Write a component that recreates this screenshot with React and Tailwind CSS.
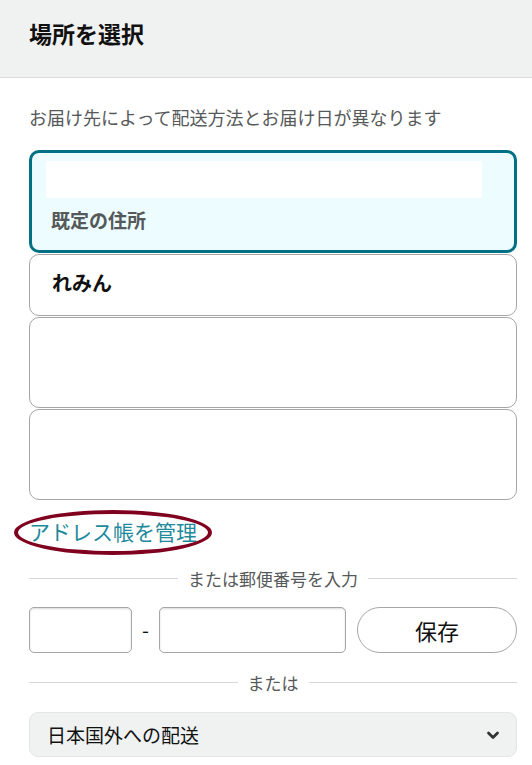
import React from 'react';

const font = { fontFamily: '"Noto Sans CJK JP", "Noto Sans", sans-serif' };

const Divider = ({ label }) => (
  <div className="flex items-center gap-[10px]">
    <div className="flex-1 h-px bg-[#d5d9d9]" />
    <span className="text-[17px] leading-none text-[#565959]">{label}</span>
    <div className="flex-1 h-px bg-[#d5d9d9]" />
  </div>
);

const App = () => {
  return (
    <div className="w-[532px] h-[765px] bg-white overflow-hidden" style={font}>
      <div className="h-[78px] bg-[#f0f2f2] border-b border-[#dcdcdc] flex items-center px-[29px]">
        <h1 className="text-[23px] font-bold text-[#111] leading-none mb-[10px]">場所を選択</h1>
      </div>

      <div className="pl-[29px] pr-[15px] pt-[30px]">
        <p className="text-[18px] leading-none text-[#565959]">
          お届け先によって配送方法とお届け日が異なります
        </p>

        <div className="mt-[24px] flex flex-col gap-[1px]">
          <div className="h-[103px] rounded-[10px] border-[3px] border-[#007185] bg-[#edfdff] px-[14px] pt-[8px]">
            <div className="h-[37px] bg-white mr-[18px]" />
            <div className="text-[19px] font-bold text-[#565959] leading-none mt-[12px] ml-[5px]">既定の住所</div>
          </div>
          <div className="h-[62px] rounded-[10px] border border-[#a6a6a6] px-[22px] flex items-start pt-[18px]">
            <span className="text-[20px] font-bold text-[#111] leading-none">れみん</span>
          </div>
          <div className="h-[91px] rounded-[10px] border border-[#a6a6a6]" />
          <div className="h-[91px] rounded-[10px] border border-[#a6a6a6]" />
        </div>

        <div className="relative mt-[21px] h-[24px]">
          <a href="#" className="text-[21px] leading-none text-[#1f8a9b] whitespace-nowrap">アドレス帳を管理</a>
          <div className="absolute left-[-15px] top-[-11px] w-[198px] h-[45px] rounded-[50%] border-[4px] border-[#800020]" />
        </div>

        <div className="mt-[25px]">
          <Divider label="または郵便番号を入力" />
        </div>

        <div className="mt-[20px] flex items-center h-[46px]">
          <input className="w-[103px] h-[46px] rounded-[5px] border border-[#a6a6a6] shadow-[inset_0_1px_2px_rgba(15,17,17,0.15)] outline-none" />
          <span className="w-[27px] text-center text-[20px] text-[#111] leading-none">-</span>
          <input className="w-[187px] h-[46px] rounded-[5px] border border-[#a6a6a6] shadow-[inset_0_1px_2px_rgba(15,17,17,0.15)] outline-none" />
          <button className="ml-[11px] flex-1 h-[46px] rounded-full border border-[#a6a6a6] bg-white text-[22px] text-[#111] leading-none">
            保存
          </button>
        </div>

        <div className="mt-[21px]">
          <Divider label="または" />
        </div>

        <div className="mt-[21px] h-[45px] rounded-[9px] border border-[#e3e6e6] bg-[#f0f2f2] flex items-center justify-between pl-[17px] pr-[15px]">
          <span className="text-[19px] text-[#111] leading-none">日本国外への配送</span>
          <svg width="16" height="16" viewBox="0 0 16 16" fill="none">
            <path d="M3.5 6l4.5 4.5 4.5-4.5" stroke="#333" strokeWidth="2.8" strokeLinecap="round" strokeLinejoin="round" />
          </svg>
        </div>
      </div>
    </div>
  );
};

export default App;
